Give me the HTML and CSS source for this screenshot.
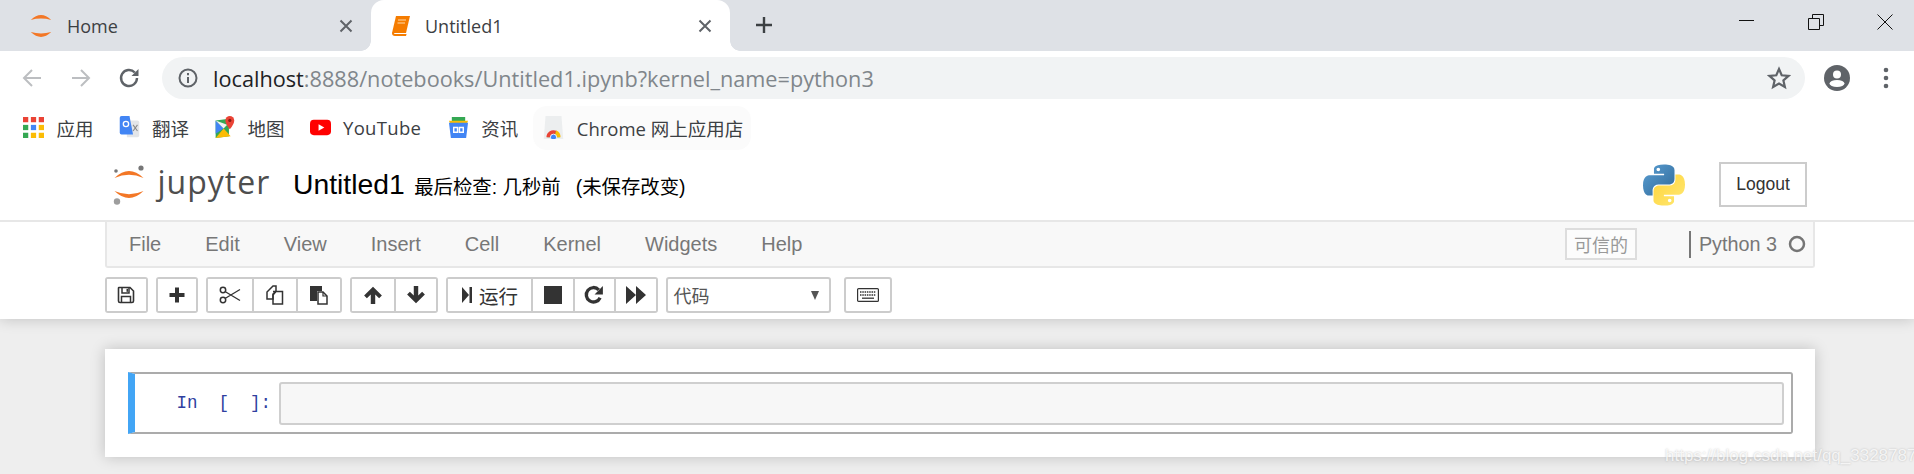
FILE: index.html
```html
<!DOCTYPE html>
<html lang="zh">
<head>
<meta charset="utf-8">
<title>Untitled1</title>
<link rel="stylesheet" href="styles.css">
</head>
<body>
<svg class="defs" width="0" height="0">
  <defs>
    <linearGradient id="pyblue" x1="0" y1="0" x2="1" y2="1"><stop offset="0" stop-color="#5a9fd4"/><stop offset="1" stop-color="#306998"/></linearGradient>
    <linearGradient id="pyyellow" x1="0" y1="0" x2="1" y2="1"><stop offset="0" stop-color="#ffd43b"/><stop offset="1" stop-color="#ffe873"/></linearGradient>
  </defs>
</svg>
<div class="chrome">
  <div class="tabstrip">
    <div class="tab">
      <svg class="favicon" viewBox="0 0 24 28"><path d="M1 7.500Q12 -3 23 7.500Q12 4.500 1 7.500Z" fill="#f37726"/><path d="M1 20.500Q12 31 23 20.500Q12 23.500 1 20.500Z" fill="#f37726"/></svg>
      <span class="tab-title">Home</span>
      <svg class="tab-close" viewBox="0 0 14 14"><path d="M1.5 1.5L12.5 12.5M12.5 1.5L1.5 12.5" stroke="#5f6368" stroke-width="2"/></svg>
    </div>
    <div class="tab active">
      <svg class="favicon book" viewBox="0 0 20 22"><path d="M5 1H19L15 18H1Z" fill="#f57c00"/><path d="M1 18Q1 21 4 21H15L15.600 19H4Q2.500 19 3 17Z" fill="#f57c00"/><path d="M7 5H15M6.500 8H14" stroke="#ffd9a8" stroke-width="1"/></svg>
      <span class="tab-title">Untitled1</span>
      <svg class="tab-close" viewBox="0 0 14 14"><path d="M1.5 1.5L12.5 12.5M12.5 1.5L1.5 12.5" stroke="#5f6368" stroke-width="2"/></svg>
    </div>
    <svg class="new-tab" viewBox="0 0 20 20"><path d="M10 2V18M2 10H18" stroke="#3c4043" stroke-width="2.400"/></svg>
    <div class="window-controls">
      <svg class="win" viewBox="0 0 16 16"><path d="M0 6.500H15" stroke="#111" stroke-width="1"/></svg>
      <svg class="win" viewBox="0 0 16 16"><path d="M.5 4.500H11.500V15.500H.5ZM4.500 4.500V.5H15.500V11.500H11.500" fill="none" stroke="#111" stroke-width="1"/></svg>
      <svg class="win" viewBox="0 0 16 16"><path d="M.5 .5L15.500 15.500M15.500 .5L.5 15.500" stroke="#111" stroke-width="1"/></svg>
    </div>
  </div>
  <div class="addressbar">
    <svg class="nav-icon" viewBox="0 0 24 24"><path d="M21 12H4M12 4L4 12L12 20" fill="none" stroke="#bcbec1" stroke-width="2"/></svg>
    <svg class="nav-icon" viewBox="0 0 24 24"><path d="M3 12H20M12 4L20 12L12 20" fill="none" stroke="#bcbec1" stroke-width="2"/></svg>
    <svg class="nav-icon" viewBox="0 0 24 24"><path d="M19 12A8 8 0 1 1 16.800 6.500" fill="none" stroke="#5f6368" stroke-width="2.400"/><path d="M20.500 3V10H13.500Z" fill="#5f6368"/></svg>
    <div class="omnibox">
      <svg class="info" viewBox="0 0 20 20"><circle cx="10" cy="10" r="8.500" fill="none" stroke="#5f6368" stroke-width="2"/><path d="M10 9V15M10 5V7.200" stroke="#5f6368" stroke-width="2"/></svg>
      <span class="url"><span class="host">localhost</span>:8888/notebooks/Untitled1.ipynb?kernel_name=python3</span>
      <svg class="star" viewBox="0 0 24 24"><path d="M12 3L14.700 9.300L21.500 9.900L16.400 14.400L17.900 21L12 17.500L6.100 21L7.600 14.400L2.500 9.900L9.300 9.300Z" fill="none" stroke="#5f6368" stroke-width="2.200"/></svg>
    </div>
    <svg class="avatar" viewBox="0 0 26 26"><circle cx="13" cy="13" r="13" fill="#5f6368"/><circle cx="13" cy="9.500" r="4" fill="#fff"/><ellipse cx="13" cy="18.500" rx="7.500" ry="3.500" fill="#fff"/></svg>
    <svg class="dots" viewBox="0 0 6 22"><circle cx="3" cy="3" r="2.300" fill="#5f6368"/><circle cx="3" cy="11" r="2.300" fill="#5f6368"/><circle cx="3" cy="19" r="2.300" fill="#5f6368"/></svg>
  </div>
  <div class="bookmarks">
    <div class="bm">
      <svg class="bm-icon" viewBox="0 0 20 20"><g fill="#ea4335"><rect x="0" y="0" width="5" height="5"/><rect x="7.500" y="0" width="5" height="5"/><rect x="15" y="0" width="5" height="5"/></g><rect x="0" y="7.500" width="5" height="5" fill="#34a853"/><rect x="7.500" y="7.500" width="5" height="5" fill="#4285f4"/><rect x="15" y="7.500" width="5" height="5" fill="#fbbc05"/><rect x="0" y="15" width="5" height="5" fill="#34a853"/><rect x="7.500" y="15" width="5" height="5" fill="#fbbc05"/><rect x="15" y="15" width="5" height="5" fill="#fbbc05"/></svg>
      <span>应用</span>
    </div>
    <div class="bm">
      <svg class="bm-icon" viewBox="0 0 22 26"><path d="M8 5H20Q22 5 22 7V22Q22 24 20 24H8Z" fill="#e3e5e8"/><path d="M2 0H11L15 21H2Q0 21 0 19V2Q0 0 2 0Z" fill="#4285f4"/><circle cx="7" cy="9" r="3" fill="none" stroke="#fff" stroke-width="1.500"/><path d="M15 10L20 17M20 10L15 17" stroke="#888" stroke-width="1.200"/></svg>
      <span>翻译</span>
    </div>
    <div class="bm">
      <svg class="bm-icon" viewBox="0 0 22 26"><path d="M1 5L16 3V23L1 25Z" fill="#34a853"/><path d="M1 25L10 14L18 23Z" fill="#fbbc05"/><path d="M1 5L10 14L1 20Z" fill="#4285f4"/><path d="M1 5L14 10L10 14Z" fill="#f1f3f4"/><path d="M17 0A5 5 0 0 1 22 5Q22 9 17 15Q12 9 12 5A5 5 0 0 1 17 0Z" fill="#ea4335"/><circle cx="17" cy="5" r="1.800" fill="#8a1c14"/></svg>
      <span>地图</span>
    </div>
    <div class="bm bm-yt">
      <svg class="bm-icon" viewBox="0 0 22 16"><rect width="22" height="16" rx="4" fill="#f00"/><path d="M9 4.500L15 8L9 11.500Z" fill="#fff"/></svg>
      <span>YouTube</span>
    </div>
    <div class="bm">
      <svg class="bm-icon" viewBox="0 0 22 24"><path d="M4 1H18V8H4Z" fill="#34a853"/><path d="M1 5H21L19 10H3Z" fill="#fbbc05"/><path d="M1 7L21 7L19 23H3Z" fill="#4285f4"/><path d="M6 12H10V17H6ZM12 12H16V17H12Z" fill="none" stroke="#fff" stroke-width="1.500"/></svg>
      <span>资讯</span>
    </div>
    <div class="bm store">
      <svg class="bm-icon" viewBox="0 0 22 26"><path d="M2 0H20L22 26H0Z" fill="#eceeef"/><path d="M4 24A7 7 0 0 1 18 24Z" fill="#34a853"/><path d="M3 24A8 8 0 0 1 14.500 16.800L11 24Z" fill="#ea4335"/><path d="M14 16.500A8 8 0 0 1 19 24H12Z" fill="#fbbc05"/><circle cx="11" cy="24" r="3.500" fill="#4285f4" stroke="#fff"/></svg>
      <span>Chrome 网上应用店</span>
    </div>
  </div>
</div>

<div class="nb-top">
  <div class="nb-header">
    <svg class="jp-mark" viewBox="0 0 32 40">
      <path d="M1.500 13Q16 -1 30.500 13Q16 6.500 1.500 13Z" fill="#f37726"/>
      <path d="M1.500 26Q16 40 30.500 26Q16 32.500 1.500 26Z" fill="#f37726"/>
      <circle cx="28" cy="3" r="2.600" fill="#767677"/><circle cx="3" cy="6" r="1.800" fill="#767677"/><circle cx="4" cy="36.500" r="3.200" fill="#9e9e9e"/>
    </svg>
    <span class="jp-word">jupyter</span>
    <span class="nb-name">Untitled1</span>
    <span class="checkpoint">最后检查: 几秒前</span>
    <span class="autosave">(未保存改变)</span>
    <svg class="py-logo" viewBox="0 0 110 110">
      <path fill="url(#pyblue)" d="M54.900 1C27 1 28.700 13.100 28.700 13.100V25.600H55.300V29.400H18.100S0 27.300 0 55.500 15.800 82.700 15.800 82.700H25.200V69.600S24.700 53.800 40.800 53.800H67.500S82.500 54 82.500 39.300V15.600S84.800 1 54.900 1ZM40.100 9.500A4.800 4.800 0 1 1 40.100 19.100 4.800 4.800 0 0 1 40.100 9.500Z"/>
      <path fill="url(#pyyellow)" d="M55.100 109C83 109 81.300 96.900 81.300 96.900V84.400H54.700V80.600H91.900S110 82.700 110 54.500 94.200 27.300 94.200 27.300H84.800V40.400S85.300 56.200 69.200 56.200H42.500S27.500 56 27.500 70.700V94.400S25.200 109 55.100 109ZM69.900 100.500A4.800 4.800 0 1 1 69.900 90.900 4.800 4.800 0 0 1 69.900 100.500Z"/>
    </svg>
    <div class="logout">Logout</div>
  </div>
  <div class="menu-rule"></div>
  <div class="menubar">
    <span class="menu-item">File</span>
    <span class="menu-item">Edit</span>
    <span class="menu-item">View</span>
    <span class="menu-item">Insert</span>
    <span class="menu-item">Cell</span>
    <span class="menu-item">Kernel</span>
    <span class="menu-item">Widgets</span>
    <span class="menu-item">Help</span>
    <span class="trusted">可信的</span>
    <span class="kernel">Python 3</span>
    <svg class="kernel-dot" viewBox="0 0 18 18"><circle cx="9" cy="9" r="7" fill="none" stroke="#757575" stroke-width="2.500"/></svg>
  </div>
  <div class="toolbar">
    <div class="btn-group">
      <div class="btn w-single"><svg class="ico" viewBox="0 0 18 18"><path d="M2 1.500H13L16.500 5V15Q16.500 16.500 15 16.500H3Q1.500 16.500 1.500 15V2Q1.500 1.500 2 1.500Z" fill="none" stroke="#333" stroke-width="1.600"/><path d="M5 2V7H12V2M4.500 16V10.500H13.500V16" fill="none" stroke="#333" stroke-width="1.500"/><rect x="9.500" y="2.800" width="1.500" height="3" fill="#333"/></svg></div>
    </div>
    <div class="btn-group">
      <div class="btn w-single"><svg class="ico" viewBox="0 0 18 18"><path d="M7 1.500H11V7H16.500V11H11V16.500H7V11H1.500V7H7Z" fill="#333"/></svg></div>
    </div>
    <div class="btn-group">
      <div class="btn w-edit"><svg class="ico-wide" viewBox="0 0 22 18"><circle cx="4" cy="4" r="2.700" fill="none" stroke="#333" stroke-width="1.500"/><circle cx="4" cy="14" r="2.700" fill="none" stroke="#333" stroke-width="1.500"/><path d="M6 5.500L21 14.500M6 12.500L21 3.500" stroke="#333" stroke-width="1.300"/></svg></div>
      <div class="btn w-edit"><svg class="ico-lg" viewBox="0 0 20 20"><path d="M8 1H11V6L8 9V14H2V7Z" fill="none" stroke="#333" stroke-width="1.500"/><path d="M8 6.500H13L17.500 6.500V19H8V10L11 6.500" fill="none" stroke="#333" stroke-width="1.500"/></svg></div>
      <div class="btn w-edit"><svg class="ico-lg" viewBox="0 0 20 20"><path d="M1 1H13V6H8V16H1Z" fill="#333"/><path d="M9 7H14L18 11V19H9Z" fill="#fff" stroke="#333" stroke-width="1.500"/><path d="M14 7V11H18" fill="none" stroke="#333" stroke-width="1.200"/></svg></div>
    </div>
    <div class="btn-group">
      <div class="btn w-move"><svg class="ico-lg" viewBox="0 0 18 18"><path d="M9 1.500L17 9.500L14.500 12L11 8.500V17H7V8.500L3.500 12L1 9.500Z" fill="#333"/></svg></div>
      <div class="btn w-move"><svg class="ico-lg" viewBox="0 0 18 18"><path d="M9 16.500L17 8.500L14.500 6L11 9.500V1H7V9.500L3.500 6L1 8.500Z" fill="#333"/></svg></div>
    </div>
    <div class="btn-group">
      <div class="btn w-run"><svg class="ico-run" viewBox="0 0 12 18"><path d="M1 1L8 9L1 17Z" fill="#333"/><rect x="8.500" y="1" width="2.500" height="16" fill="#333"/></svg><span class="run-label">运行</span></div>
      <div class="btn w-ctl"><svg class="ico" viewBox="0 0 18 18"><rect x="0" y="0" width="18" height="18" fill="#333"/></svg></div>
      <div class="btn w-ctl"><svg class="ico-lg" viewBox="0 0 18 18"><path d="M14.500 11.500A6.500 6.500 0 1 1 13.300 4.300" fill="none" stroke="#333" stroke-width="3"/><path d="M17 1V8.500H9.500Z" fill="#333"/></svg></div>
      <div class="btn w-ctl"><svg class="ico-lg" viewBox="0 0 18 18"><path d="M0 1L9 9V1L18 9L9 17V9L0 17Z" fill="#333"/></svg></div>
    </div>
    <div class="select">
      <span>代码</span>
      <span class="caret"></span>
    </div>
    <div class="btn kb"><svg class="ico-kb" viewBox="0 0 22 14"><rect x=".6" y=".6" width="20.800" height="12.800" rx="1" fill="none" stroke="#333" stroke-width="1.200"/><path d="M3 4H19M3 7H19" stroke="#333" stroke-width="1.300" stroke-dasharray="1.500 .8"/><path d="M5 10.200H17" stroke="#333" stroke-width="1.300"/></svg></div>
  </div>
</div>

<div class="site">
  <div class="panel">
    <div class="cell">
      <div class="prompt">In&nbsp;&nbsp;[&nbsp;&nbsp;]:</div>
      <div class="input-area"></div>
    </div>
  </div>
</div>
<div class="watermark">https://blog.csdn.net/qq_33287871</div>
</body>
</html>
```
FILE: styles.css
```css
* { box-sizing: border-box; }
html, body { margin: 0; padding: 0; height: 474px; overflow: hidden; }
body { background: #eee; font-family: "Liberation Sans", "Noto Sans CJK SC", sans-serif; position: relative; }
.defs { position: absolute; }

.chrome { background: #fff; font-family: "Open Sans", "Noto Sans CJK SC", sans-serif; }
.tabstrip { height: 51px; background: #dee1e6; display: flex; align-items: flex-end; padding-left: 12px; }
.tab { width: 359px; height: 51px; display: flex; align-items: center; padding: 0 18px 0 17px; position: relative; }
.tab.active { background: #fff; border-radius: 13px 13px 0 0; padding-left: 20px; }
.tab.active::before, .tab.active::after { content: ""; position: absolute; bottom: 0; width: 10px; height: 10px; background: radial-gradient(circle at 0 0, transparent 9.500px, #fff 10px); }
.tab.active::before { left: -10px; }
.tab.active::after { right: -10px; transform: scaleX(-1); }
.favicon { width: 24px; height: 26px; flex: none; }
.favicon.book { width: 20px; height: 22px; }
.tab-title { font-size: 18px; color: #3c4043; margin-left: 14px; flex: 1; }
.tab-close { width: 14px; height: 14px; flex: none; }
.new-tab { width: 20px; height: 20px; margin: 0 0 16px 24px; flex: none; }
.window-controls { margin-left: auto; display: flex; align-self: flex-start; gap: 53px; padding: 14px 21px 0 0; }
.win { width: 16px; height: 16px; display: block; }

.addressbar { height: 54px; display: flex; align-items: center; padding: 0 0 0 20px; }
.nav-icon { width: 24px; height: 24px; margin-right: 25px; flex: none; }
.omnibox { width: 1643px; height: 42px; margin-left: -5px; border-radius: 21px; background: #f1f3f4; display: flex; align-items: center; padding: 0 14px 0 16px; }
.info { width: 20px; height: 20px; flex: none; }
.url { font-size: 21.700px; color: #80868b; margin-left: 15px; flex: 1; white-space: nowrap; }
.host { color: #202124; }
.star { width: 24px; height: 24px; flex: none; }
.avatar { width: 26px; height: 26px; margin-left: 18.500px; flex: none; }
.dots { width: 6px; height: 22px; margin-left: 33px; flex: none; }

.bookmarks { height: 45px; display: flex; align-items: center; padding-left: 23px; font-size: 18.500px; color: #3c4043; gap: 25px; }
.bm { display: flex; align-items: center; gap: 12.500px; white-space: nowrap; }
.bm-yt { letter-spacing: .3px; margin-right: 1.500px; }
.bm-icon { width: 21px; height: 23px; flex: none; }
.bm.store { background: #fbfbfb; border-radius: 14px; padding: 9px 8px 9px 10px; margin-left: -10px; }

.nb-top { background: #fff; height: 169px; box-shadow: 0 0 14px rgba(0,0,0,.2); position: relative; clip-path: inset(0 -30px -30px -30px); }
.nb-header { height: 70px; display: flex; align-items: center; padding-left: 113px; color: #000; }
.jp-mark { width: 32px; height: 40px; flex: none; }
.jp-word { font-family: "Open Sans", sans-serif; font-size: 32px; color: #4e4e4e; margin-left: 12.500px; letter-spacing: 1px; line-height: 40px; margin-top: -6px; width: 135.500px; flex: none; }
.nb-name { font-size: 28.300px; margin: -2px 9.500px 0 0; }
.checkpoint { font-size: 19.400px; margin: 0 15px 0 0; }
.autosave { font-size: 19.400px; }
.py-logo { width: 42px; height: 42px; margin-left: auto; flex: none; }
.logout { width: 88px; height: 45px; margin: -2px 107px 0 34px; border: 2px solid #ccc; display: flex; align-items: center; justify-content: center; font-size: 17.500px; color: #333; flex: none; }
.menu-rule { height: 2px; background: #e7e7e7; }
.menubar { margin: 0 99px 0 105px; height: 46px; background: #f8f8f8; border: 2px solid #e7e7e7; border-top: 0; border-radius: 0 0 3px 3px; display: flex; align-items: center; }
.menu-item { font-size: 20px; color: #777; padding: 0 22px; }
.trusted { margin-left: auto; border: 2px solid #ddd; width: 72px; height: 32px; display: flex; align-items: center; justify-content: center; font-size: 18px; color: #999; background: #fcfcfc; }
.kernel { margin-left: 52px; border-left: 2px solid #777; height: 27px; line-height: 27px; padding-left: 8px; font-size: 19.800px; color: #777; }
.kernel-dot { width: 18px; height: 18px; margin: 0 7px 0 11px; flex: none; }
.toolbar { margin: 9px 0 0 105px; display: flex; gap: 8px; }
.btn-group { display: flex; border: 2px solid #ccc; border-radius: 3px; height: 36px; }
.btn { display: flex; align-items: center; justify-content: center; height: 100%; background: #fff; }
.btn-group .btn + .btn { border-left: 2px solid #ccc; }
.w-single { width: 38.500px; }
.w-edit { width: 44px; }
.w-move { width: 42px; }
.w-run { width: 83px; }
.w-ctl { width: 41.500px; }
.ico { width: 18px; height: 18px; }
.ico-lg { width: 20px; height: 20px; }
.ico-wide { width: 22px; height: 18px; }
.ico-run { width: 12px; height: 18px; }
.run-label { font-size: 19.500px; color: #333; margin-left: 6px; }
.select { width: 165px; height: 36px; border: 2px solid #ccc; border-radius: 3px; display: flex; align-items: center; justify-content: space-between; padding: 0 10px 0 6px; font-size: 18px; color: #555; background: #fff; }
.caret { width: 0; height: 0; border-left: 4.500px solid transparent; border-right: 4.500px solid transparent; border-top: 9px solid #555; }
.kb { width: 48px; height: 36px; border: 2px solid #ccc; border-radius: 3px; margin-left: 5.500px; }
.ico-kb { width: 22px; height: 14px; }

.site { padding: 30px 99px 0 105px; }
.panel { background: #fff; height: 108px; padding: 23px 22px 0 23px; box-shadow: 0 0 14px rgba(0,0,0,.2); }
.cell { height: 62px; border: 2px solid #ababab; border-left: 7px solid #42a5f5; border-radius: 0 3px 3px 0; display: flex; align-items: center; padding: 0 7px 0 0; }
.prompt { width: 144px; padding-right: 8px; text-align: right; font-family: "Liberation Mono", monospace; font-size: 17.500px; color: #303f9f; white-space: nowrap; }
.input-area { flex: 1; height: 43px; background: #f7f7f7; border: 2px solid #cfcfcf; border-radius: 3px; }
.watermark { position: absolute; left: 1665px; top: 446px; font-size: 17px; color: rgba(255,255,255,.8); text-shadow: 0 0 2px rgba(120,120,120,.45); white-space: nowrap; }
```
